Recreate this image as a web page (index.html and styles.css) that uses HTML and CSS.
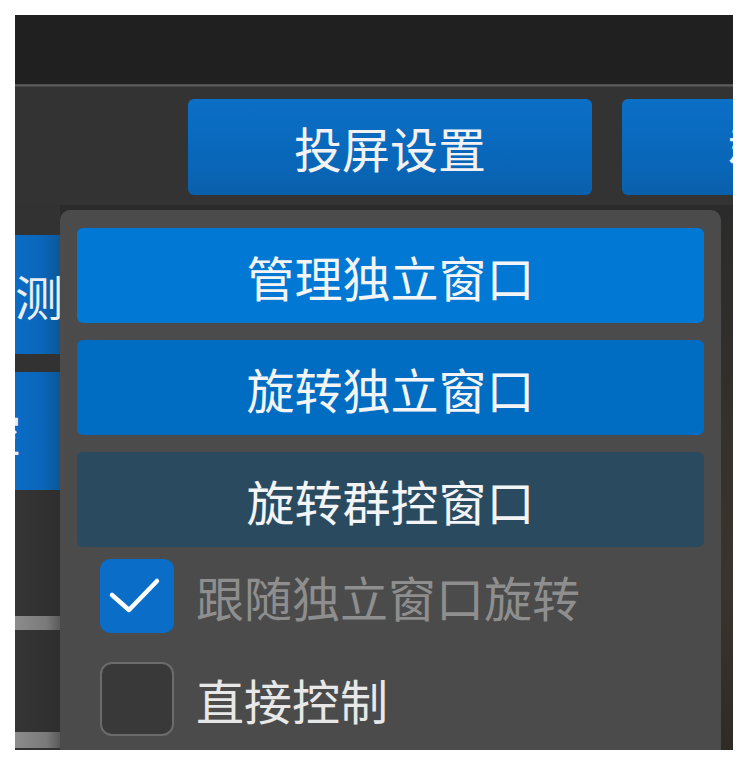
FILE: index.html
```html
<!DOCTYPE html>
<html lang="zh-CN">
<head>
<meta charset="utf-8">
<title>投屏设置</title>
<link rel="stylesheet" href="styles.css">
</head>
<body>
<div class="frame">
  <div class="titlebar"></div>
  <div class="sep"></div>
  <div class="toolbar">
    <div class="tbtn">投屏设置</div>
    <div class="tbtn">群控设置</div>
  </div>
  <div class="main">
    <div class="side">
      <div class="sbtn sbtn-a"><span>检测</span></div>
      <div class="sbtn sbtn-b"><span>群控</span></div>
      <div class="sdark sdark-a"></div>
      <div class="sbar"></div>
      <div class="sdark sdark-b"></div>
      <div class="sbar sbar-b"></div>
    </div>
    <div class="scene"></div>
  </div>
  <div class="popup">
    <div class="item item-1">管理独立窗口</div>
    <div class="item item-2">旋转独立窗口</div>
    <div class="item item-3">旋转群控窗口</div>
    <div class="checks">
      <div class="check-row">
        <span class="box box-on">
          <svg width="74" height="74" viewBox="0 0 74 74"><path d="M12 36 L29 51 L57 22" fill="none" stroke="#ffffff" stroke-width="4.5" stroke-linecap="round" stroke-linejoin="round"/></svg>
        </span>
        <span class="label label-dim">跟随独立窗口旋转</span>
      </div>
      <div class="check-row">
        <span class="box box-off"></span>
        <span class="label">直接控制</span>
      </div>
    </div>
  </div>
</div>
</body>
</html>
```
FILE: styles.css
```css
html, body {
  margin: 0;
  padding: 0;
  background: #ffffff;
}
body {
  padding: 15px 14px 16px 15px;
  font-family: "Noto Sans CJK SC", "Microsoft YaHei", sans-serif;
}
.frame {
  position: relative;
  width: 718px;
  height: 735px;
  overflow: hidden;
  background: #323232;
  display: flex;
  flex-direction: column;
}
.titlebar {
  height: 69px;
  background: #202020;
  flex-shrink: 0;
}
.sep {
  height: 3px;
  background: linear-gradient(#4a4a4a, #5c5c5c, #3c3c3c);
  flex-shrink: 0;
}
.toolbar {
  height: 118px;
  box-sizing: border-box;
  padding: 12px 0 0 173px;
  display: flex;
  gap: 30px;
  align-items: flex-start;
  background: #333333;
  flex-shrink: 0;
}
.tbtn {
  flex-shrink: 0;
  width: 404px;
  height: 96px;
  border-radius: 6px;
  background: linear-gradient(#0b6fc6, #0966b8 70%, #0a5faa);
  color: #f2f2f2;
  font-size: 48px;
  display: flex;
  align-items: center;
  justify-content: center;
  line-height: 1;
}
.main {
  flex: 1;
  display: flex;
}
.side {
  width: 45px;
  flex-shrink: 0;
  padding-top: 30px;
  display: flex;
  flex-direction: column;
  background: #323232;
}
.sbtn {
  background: linear-gradient(to right, #0a6cc6, #0a66ba 60%, #0c5796);
  overflow: hidden;
  display: flex;
  align-items: center;
  color: #e8eef6;
  font-size: 48px;
  line-height: 1;
  white-space: nowrap;
}
.sbtn-a {
  height: 119px;
  justify-content: flex-end;
}
.sbtn-a span {
  margin-right: -3px;
}
.sbtn-b {
  height: 118px;
  margin-top: 18px;
}
.sbtn-b span {
  margin-left: -91px;
}
.sdark {
  background: linear-gradient(to right, #353535, #2e2e2e);
}
.sdark-a { height: 126px; }
.sdark-b { height: 102px; }
.sbar {
  height: 14px;
  background: linear-gradient(to right, #8c8c8c, #7a7a7a 70%, #5a5a5a);
}
.sbar-b { height: 16px; }
.scene {
  flex: 1;
  background: linear-gradient(#2b2b2b, #34302b 40%, #3a342e 70%, #2e2a26);
}
.popup {
  position: absolute;
  left: 45px;
  top: 195px;
  width: 661px;
  bottom: 0;
  box-sizing: border-box;
  padding: 18px 17px 0 17px;
  background: #4b4b4b;
  border-radius: 10px 10px 0 0;
  display: flex;
  flex-direction: column;
  gap: 17px;
}
.item {
  height: 95px;
  border-radius: 6px;
  display: flex;
  align-items: center;
  justify-content: center;
  color: #f2f4f6;
  font-size: 48px;
  line-height: 1;
}
.item-1 { background: #0078d4; }
.item-2 { background: #006cc2; }
.item-3 { background: #2a4a60; }
.checks {
  margin-top: -5px;
  padding-left: 23px;
  display: flex;
  flex-direction: column;
  gap: 29px;
}
.check-row {
  display: flex;
  align-items: center;
  gap: 22px;
}
.box {
  width: 74px;
  height: 74px;
  box-sizing: border-box;
  border-radius: 10px;
  flex-shrink: 0;
  display: block;
}
.box svg { display: block; }
.box-on {
  background: #0a6ec8;
}
.box-off {
  background: #393939;
  border: 2px solid #6b6b6b;
  border-radius: 12px;
}
.label {
  font-size: 48px;
  line-height: 1;
  color: #e8e8e8;
  white-space: nowrap;
}
.label-dim {
  color: #8e8e8e;
}
```
